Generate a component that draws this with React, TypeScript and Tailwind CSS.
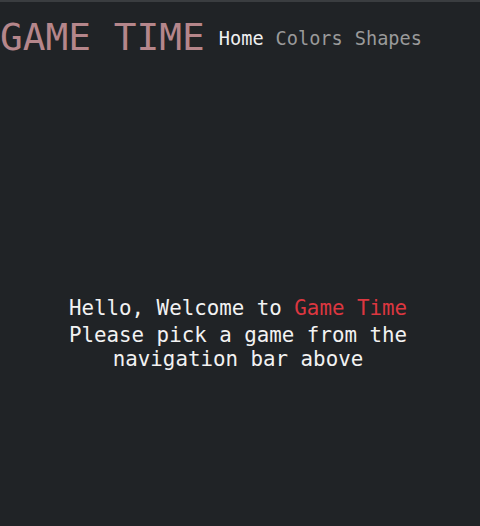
export default function App() {
  const mono = { fontFamily: '"DejaVu Sans Mono", "Liberation Mono", monospace' };
  return (
    <div className="w-[480px] h-[526px] bg-[#202326] border-t-2 border-[#3a3d40] flex flex-col" style={mono}>
      <nav className="flex items-center h-[70px]">
        <span className="text-[37.8px] text-[#b5868b] leading-[66px]">GAME TIME</span>
        <div className="flex gap-[12px] ml-[14px] text-[18.6px] mt-[3px]">
          <span className="text-[#f0f0f0]">Home</span>
          <span className="text-[#9a9a9a]">Colors</span>
          <span className="text-[#9a9a9a]">Shapes</span>
        </div>
      </nav>
      <div className="flex flex-col items-center text-center text-[20.8px] text-[#f2f2f2] mt-[223px] pr-[4px]">
        <p className="leading-[26px]">Hello, Welcome to <span className="text-[#dc3740]">Game Time</span></p>
        <p className="leading-[24px] w-[350px] mt-[2px]">Please pick a game from the navigation bar above</p>
      </div>
    </div>
  );
}
